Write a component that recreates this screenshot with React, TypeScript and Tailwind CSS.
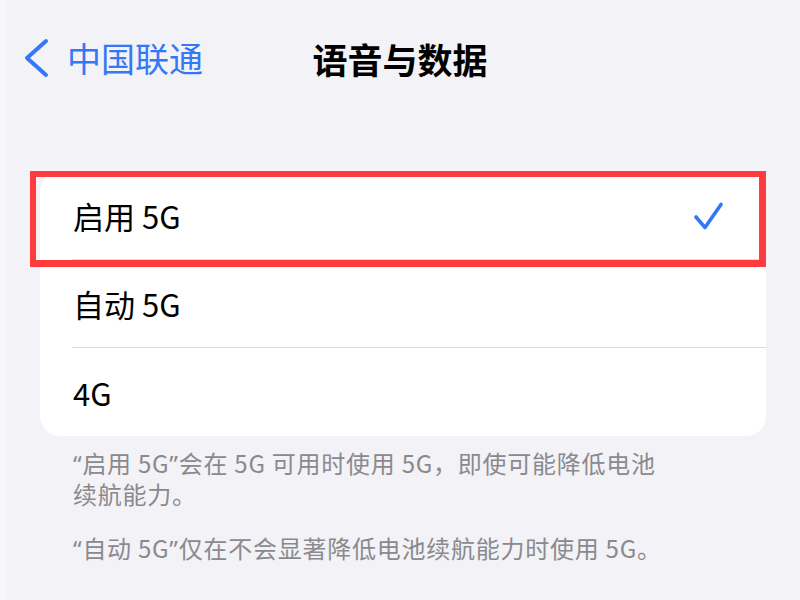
import React from 'react';

const options = [
  { label: '启用 5G', selected: true },
  { label: '自动 5G', selected: false },
  { label: '4G', selected: false },
];

// 引号用西文字体，宽度更窄
function Q({ children }: { children: React.ReactNode }) {
  return <span className="font-['Noto_Sans',sans-serif]">{children}</span>;
}

export default function App() {
  return (
    <div className="w-[800px] h-[600px] overflow-hidden bg-[#f2f2f7] shadow-[inset_6px_0_0_#f7f7f9] font-['Noto_Sans_CJK_SC','Noto_Sans',sans-serif]">
      {/* 导航栏 */}
      <div className="grid grid-cols-[1fr_auto_1fr] items-center pt-[38px] h-[78px]">
        <div className="flex items-center pl-[24px] text-[#3478f6]">
          <svg width="26" height="40" viewBox="0 0 26 40" fill="none">
            <path d="M22 3 L3 20 L22 37" stroke="#3478f6" strokeWidth="4" strokeLinecap="round" strokeLinejoin="round" />
          </svg>
          <span className="ml-[17px] text-[34px] leading-none">中国联通</span>
        </div>
        <div className="text-[35px] leading-none font-semibold text-black">语音与数据</div>
        <div />
      </div>

      {/* 选项列表 */}
      <div className="mt-[94px] ml-[40px] w-[726px] rounded-[20px] bg-white">
        {options.map((opt, i) => (
          <div key={opt.label} className="relative h-[88px] pl-[32px]">
            <div
              className={
                'flex h-full items-center justify-between pl-[1px] pr-[43px] text-[31px] leading-none text-black ' +
                (i < options.length - 1 ? 'border-b border-[#dcdce0]' : '')
              }
            >
              <span>{opt.label}</span>
              {opt.selected && (
                <svg width="29" height="28" viewBox="0 0 29 28" fill="none">
                  <path d="M2 15 L11 25.5 L27 2.5" stroke="#3478f6" strokeWidth="3.6" strokeLinecap="round" strokeLinejoin="round" />
                </svg>
              )}
            </div>
            {opt.selected && (
              <div className="pointer-events-none absolute -left-[10px] -top-[1px] right-0 -bottom-[7px] z-10 border-[6px] border-r-[7px] border-b-[7px] border-[#fe3b3d]" />
            )}
          </div>
        ))}
      </div>

      {/* 说明文字 */}
      <div className="pl-[73px] pt-[12px] text-[24px] leading-[30px] tracking-[0.75px] text-[#8a8a8e] whitespace-nowrap">
        <p>
          <Q>“</Q>启用 5G<Q>”</Q>会在 5G 可用时使用 5G，即使可能降低电池
          <br />
          续航能力。
        </p>
        <p className="mt-[24px]">
          <Q>“</Q>自动 5G<Q>”</Q>仅在不会显著降低电池续航能力时使用 5G。
        </p>
      </div>
    </div>
  );
}
